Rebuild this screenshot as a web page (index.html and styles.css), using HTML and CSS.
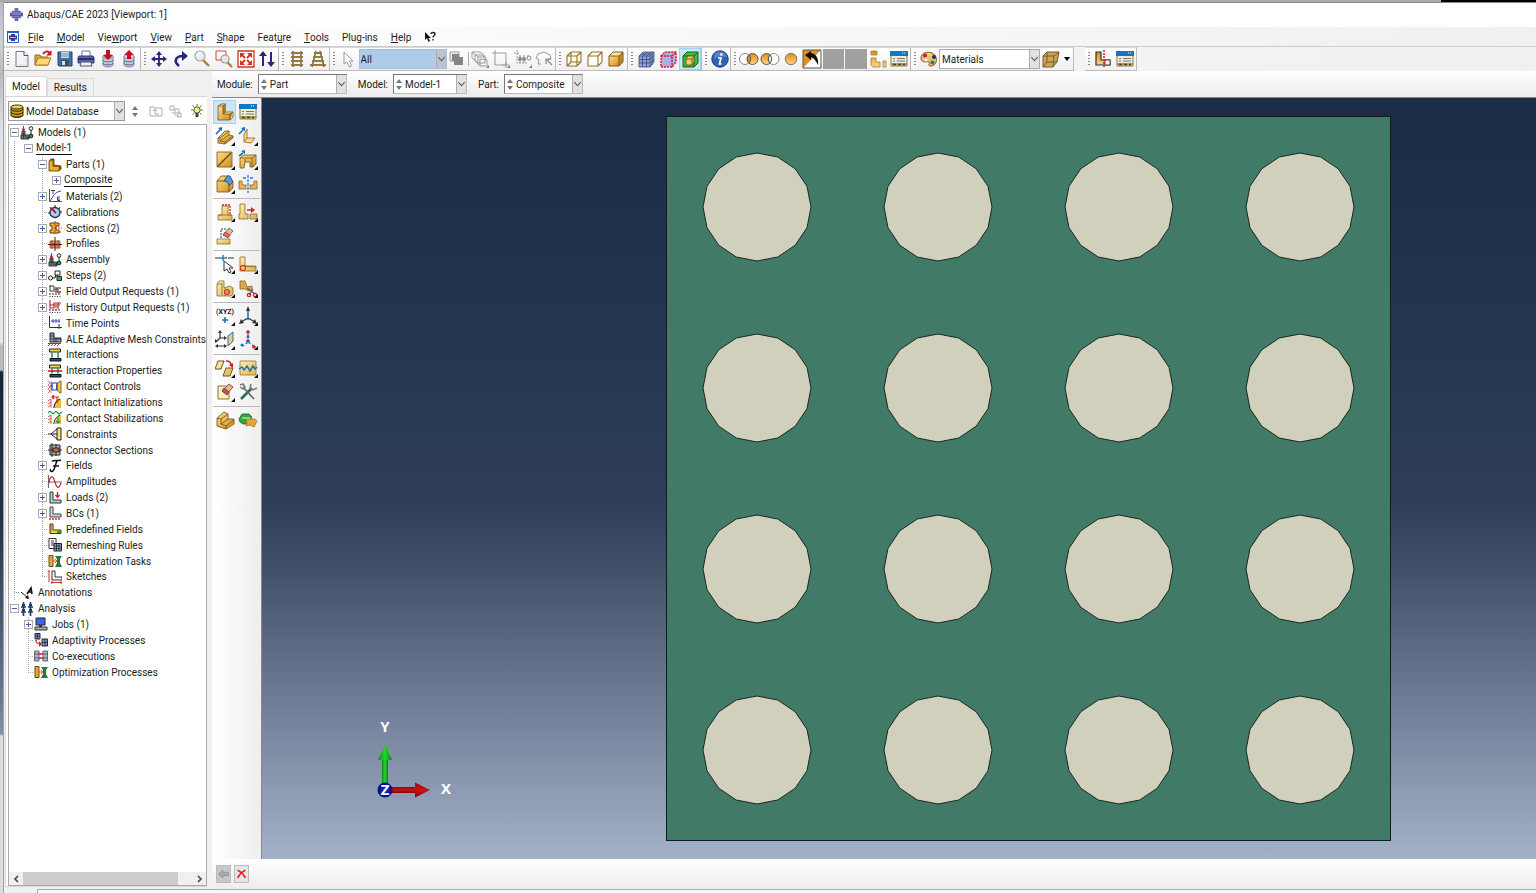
FILE: index.html
```html
<!DOCTYPE html>
<html lang="en">
<head>
<meta charset="utf-8">
<title>Abaqus/CAE 2023 [Viewport: 1]</title>
<link rel="stylesheet" href="styles.css">
</head>
<body>
<svg class="defs" aria-hidden="true">
<defs>
<linearGradient id="gold" x1="0" y1="0" x2="1" y2="1"><stop offset="0" stop-color="#ffe08a"/><stop offset="1" stop-color="#d08a1c"/></linearGradient>
<linearGradient id="org" x1="0" y1="0" x2="0" y2="1"><stop offset="0" stop-color="#e08a10"/><stop offset="1" stop-color="#ffd48a"/></linearGradient>
<linearGradient id="tan" x1="0" y1="0" x2="1" y2="1"><stop offset="0" stop-color="#fff0b8"/><stop offset="1" stop-color="#e0b050"/></linearGradient>
<linearGradient id="sky" x1="0" y1="0" x2="0" y2="1"><stop offset="0" stop-color="#1b2d46"/><stop offset=".3" stop-color="#24354f"/><stop offset=".53" stop-color="#2e3e58"/><stop offset=".62" stop-color="#42516a"/><stop offset="1" stop-color="#a3b1c9"/></linearGradient>
<linearGradient id="gr" x1="0" y1="0" x2="1" y2="0"><stop offset="0" stop-color="#0a8a12"/><stop offset=".5" stop-color="#22d92c"/><stop offset="1" stop-color="#078010"/></linearGradient>
<linearGradient id="rd" x1="0" y1="0" x2="0" y2="1"><stop offset="0" stop-color="#8c0a0a"/><stop offset=".5" stop-color="#d01010"/><stop offset="1" stop-color="#780606"/></linearGradient>
<radialGradient id="bl"><stop offset="0" stop-color="#1a30d8"/><stop offset="1" stop-color="#040a86"/></radialGradient>
<polygon id="fiber" points="0,-54 20.7,-50 38.2,-38.2 50,-20.7 54,0 50,20.7 38.2,38.2 20.7,50 0,54 -20.7,50 -38.2,38.2 -50,20.7 -54,0 -50,-20.7 -38.2,-38.2 -20.7,-50"/>
</defs>
<symbol id="logo" viewBox="0 0 14 14"><path d="M5 0h4v3H5zM5 11h4v3H5zM2 3h10v2H2zM2 9h10v2H2z" fill="#6f6cae"/><path d="M0 5h14v4H0z" fill="#5552a0"/><path d="M2 6.500h10" stroke="#b5b3dc"/></symbol>
<symbol id="vlogo" viewBox="0 0 12 12"><path d="M.5.5h11v11H.5z" fill="#fff" stroke="#1f5fc0"/><path d="M0 0h12v2H0z" fill="#1f5fc0"/><path d="M4 3h4v1.500h2v4H8V10H4V8.500H2v-4h2z" fill="#3c3890"/><path d="M3 6.500h6" stroke="#b5b3dc"/></symbol>
<symbol id="helpc" viewBox="0 0 12 12"><path d="M1 1v8l2-2 1.500 4 1.500-1-1.500-3H7z" fill="#111"/><path d="M7 3c0-2 4-2 4 0 0 1.500-2 1.500-2 3.500M9 8v1.500" fill="none" stroke="#222" stroke-width="1.400"/></symbol>
<symbol id="new" viewBox="0 0 18 18"><path d="M3 1.500h8l4 4v11H3z" fill="#f4f4fb" stroke="#777"/><path d="M11 1.500v4h4" fill="#fff" stroke="#555"/><path d="M13 8v7H5" fill="none" stroke="#d8d8e4"/></symbol>
<symbol id="open" viewBox="0 0 18 18"><path d="M1 15V5h5l1 2h7v8z" fill="#d8a640" stroke="#8d6a1c"/><path d="M1 15l3-7h13l-3 7z" fill="#ffd673" stroke="#a67c22"/><path d="M9 4c2-3 5-3 7-1" fill="none" stroke="#d01818" stroke-width="2"/><path d="M17.500 0v5.500H12z" fill="#d01818"/></symbol>
<symbol id="save" viewBox="0 0 18 18"><path d="M2 2h14v14H3l-1-1z" fill="#3a72ae" stroke="#27425f"/><path d="M5 2h8v6H5z" fill="#c9d8e4"/><path d="M5 4h8M5 6h8" stroke="#7b93a6"/><path d="M5 10h8v6H5z" fill="#3f4c5b"/><path d="M6 11h3v4H6z" fill="#dde"/></symbol>
<symbol id="print" viewBox="0 0 18 18"><path d="M5 1h8v6H5z" fill="#fff" stroke="#67a"/><path d="M2 6h14l1 2v5H1V8z" fill="#5c63b5" stroke="#333a70"/><path d="M1 9h16" stroke="#2d3060" stroke-width="2"/><path d="M4 12h10l1 4H3z" fill="#eef" stroke="#556"/></symbol>
<symbol id="db" viewBox="0 0 18 18"><path d="M4 6v9c0 2.500 10 2.500 10 0V6" fill="#c4cad8" stroke="#8088a0"/><ellipse cx="9" cy="6.500" rx="5" ry="2" fill="#e0e4ec" stroke="#8088a0"/><path d="M4 10c0 2.500 10 2.500 10 0M4 13c0 2.500 10 2.500 10 0" fill="none" stroke="#5d6690"/></symbol>
<symbol id="dbdown" viewBox="0 0 18 18"><use href="#db"/><path d="M7 0h4v5h3L9 10 4 5h3z" fill="#c8101c"/></symbol>
<symbol id="dbup" viewBox="0 0 18 18"><use href="#db"/><path d="M7 9h4V5h3L9 0 4 5h3z" fill="#c8101c"/></symbol>
<symbol id="pan" viewBox="0 0 18 18"><path d="M9 3v12M3 9h12" stroke="#29277d" stroke-width="1.800"/><path d="M9 1l3 4H6zM9 17l3-4H6zM1 9l4-3v6zM17 9l-4-3v6z" fill="#29277d"/></symbol>
<symbol id="rot" viewBox="0 0 18 18"><path d="M7 16C1 11 4 6 11 6" fill="none" stroke="#29277d" stroke-width="2.600"/><path d="M10 1l6 5-6 5z" fill="#29277d"/></symbol>
<symbol id="mag" viewBox="0 0 18 18"><path d="M10 10l6 6" stroke="#b07c38" stroke-width="2.400"/><circle cx="7" cy="6" r="5" fill="#e9edf0" stroke="#a8a8a8" stroke-width="1.200"/><path d="M4 6c0-2 2-3 4-3" fill="none" stroke="#fff" stroke-width="1.500"/></symbol>
<symbol id="magbox" viewBox="0 0 18 18"><path d="M1 1h10v9H1z" fill="none" stroke="#d8402c"/><path d="M12 12l5 5" stroke="#b07c38" stroke-width="2.400"/><circle cx="10" cy="9" r="4" fill="#e9edf0" fill-opacity=".8" stroke="#999" stroke-width="1.200"/></symbol>
<symbol id="fit" viewBox="0 0 18 18"><path d="M1 1h16v16H1z" fill="#fff" stroke="#d83020" stroke-width="1.300"/><path d="M3 3h5L3 8zM15 3v5l-5-5zM3 15v-5l5 5zM15 15h-5l5-5z" fill="#d83020"/><path d="M4 4l4 4M14 4l-4 4M4 14l4-4M14 14l-4-4" stroke="#d83020" stroke-width="1.800"/></symbol>
<symbol id="updn" viewBox="0 0 18 18"><path d="M5 5v11M13 2v11" stroke="#29277d" stroke-width="2"/><path d="M5 1l4 5H1zM13 17l4-5H9z" fill="#29277d"/></symbol>
<symbol id="lad1" viewBox="0 0 18 18"><path d="M5 1v16M13 1v16" stroke="#66501e" stroke-width="1.300"/><path d="M3 3h12M3 7h12M3 11h12M3 15h12" stroke="#96793c" stroke-width="1.800"/></symbol>
<symbol id="lad2" viewBox="0 0 18 18"><path d="M7 1L3 17M11 1l4 16" stroke="#66501e" stroke-width="1.300"/><path d="M5 3h8M4 7h10M3 11h12M1 15h16" stroke="#96793c" stroke-width="1.800"/></symbol>
<symbol id="cur" viewBox="0 0 18 18"><path d="M5 2v12l3-2 2.500 5 2-1-2-5H14z" fill="#fff" stroke="#999"/></symbol>
<symbol id="ovl" viewBox="0 0 18 18"><path d="M2 2h9v9H2z" fill="#eee" stroke="#999"/><path d="M6 7h9v8H6z" fill="#858585"/><path d="M4 4h7v7H4z" fill="#858585"/></symbol>
<symbol id="gcube" viewBox="0 0 18 18"><path d="M1 2h8l5 4v7H7L1 8zM1 2l6 5v6M7 7h7M4 5h7l5 5v6H9l-5-5zM9 9v7M9 9l7 1" fill="none" stroke="#999"/><path d="M18 15v3h-3z" fill="#777"/></symbol>
<symbol id="gbox" viewBox="0 0 18 18"><path d="M0 3h14v12M3 0v15h11" fill="none" stroke="#999"/><path d="M14 12v6M11 15h6" stroke="#999"/><path d="M18 15v3h-3z" fill="#777"/></symbol>
<symbol id="gpts" viewBox="0 0 18 18"><path d="M0 3h6M3 0v13h11" fill="none" stroke="#999" stroke-dasharray="2 1"/><path d="M6 5v8M10 5v8M14 5v5" stroke="#888"/><circle cx="6" cy="9" r="2" fill="#888"/><circle cx="10" cy="9" r="2" fill="#888"/><circle cx="15" cy="8" r="2" fill="#fff" stroke="#888"/><path d="M18 15v3h-3z" fill="#777"/></symbol>
<symbol id="gpoly" viewBox="0 0 18 18"><path d="M6 14H3l1-4-3-2 2-4 6-2 6 3 1 4-3 1" fill="none" stroke="#999"/><path d="M17 15l-5-5M11 14V9h5" fill="none" stroke="#888" stroke-width="1.200"/></symbol>
<symbol id="wire" viewBox="0 0 18 18"><path d="M2 6l4-4h10v10l-4 4H2zM2 6h10v10M12 6l4-4M6 2v10h10M6 12l-4 4" fill="#fff8e8" stroke="#96722a" stroke-width="1.100"/></symbol>
<symbol id="hid" viewBox="0 0 18 18"><path d="M2 6l4-4h10v10l-4 4H2zM2 6h10v10M12 6l4-4" fill="#fff" stroke="#96722a" stroke-width="1.100"/></symbol>
<symbol id="shd" viewBox="0 0 18 18"><path d="M2 6h10v10H2z" fill="url(#gold)"/><path d="M2 6l4-4h10l-4 4z" fill="#ffe9a8"/><path d="M12 6l4-4v10l-4 4z" fill="#c08a20"/><path d="M2 6l4-4h10v10l-4 4H2zM2 6h10v10M12 6l4-4" fill="none" stroke="#7d5d1c"/></symbol>
<symbol id="mesh" viewBox="0 0 18 18"><path d="M2 6l4-4h11v10l-4 5H2z" fill="#8fa3d8"/><path d="M2 6l4-4h11v10l-4 5H2zM2 6h11v11M13 6l4-4M5.500 6v11M9.500 6v11M2 9.500h11l4-4M2 13h11l4-4M6 6l4-4M10 6l4-4M4 4h11v11" fill="none" stroke="#3a4678" stroke-width=".8"/></symbol>
<symbol id="seed" viewBox="0 0 18 18"><path d="M2 6l4-4h11v10l-4 5H2z" fill="#a9b2e2"/><path d="M2 6l4-4h11v10l-4 5H2zM2 6h11v11M13 6l4-4" fill="none" stroke="#e01a30" stroke-width="1.500" stroke-dasharray="2 1"/></symbol>
<symbol id="grn" viewBox="0 0 18 18"><path d="M2 6l4-4h11v11l-4 4H2z" fill="#2fc832" stroke="#156018"/><path d="M2 6h11v11M13 6l4-4" fill="none" stroke="#156018"/><path d="M5 9l2-3h6v6l-2 3H5z" fill="#e8d468" stroke="#8f4e20"/><path d="M5 9h6v6M11 9l2-3" fill="none" stroke="#8f4e20"/></symbol>
<symbol id="info" viewBox="0 0 18 18"><circle cx="9" cy="9" r="8.200" fill="#2f63b4" stroke="#1c3d7c"/><path d="M9 1.500a7 7 0 0 1 7 6c-4-2-9-1-13 1a6 6 0 0 1 6-7z" fill="#6f98d6" opacity=".6"/><circle cx="10.300" cy="4.500" r="1.300" fill="#fff"/><path d="M7 8h3l-1.500 6h2" fill="none" stroke="#fff" stroke-width="1.700"/></symbol>
<symbol id="cc1" viewBox="0 0 20 18"><circle cx="6" cy="9" r="5.500" fill="#fff" stroke="#888"/><circle cx="13.500" cy="9" r="5.500" fill="url(#org)" stroke="#6c5a38"/><path d="M10 5a5.500 5.500 0 0 1 0 8 6 6 0 0 1 0-8" fill="#e89a20" stroke="#555"/></symbol>
<symbol id="cc2" viewBox="0 0 20 18"><circle cx="6.500" cy="9" r="5.500" fill="url(#org)" stroke="#6c5a38"/><circle cx="13.500" cy="9" r="5.500" fill="#fff" stroke="#888"/><path d="M10 5a5.500 5.500 0 0 1 0 8 6 6 0 0 1 0-8" fill="#eee" stroke="#555"/></symbol>
<symbol id="cc3" viewBox="0 0 18 18"><circle cx="9" cy="9" r="5.700" fill="url(#org)" stroke="#8a7854"/></symbol>
<symbol id="inv" viewBox="0 0 20 20"><path d="M1 1h18v18H1z" fill="#fff"/><path d="M1 1h18L1 19z" fill="#e09020"/><path d="M1 1h18v18H1z" fill="none" stroke="#555"/><path d="M3 6l6-4v2c5 1 8 5 7 12-2-4-4-7-7-8v3z" fill="#111"/></symbol>
<symbol id="blocks" viewBox="0 0 18 18"><path d="M2 1h6v4H2zM2 8h5v4h4v5H4l-2-2zM14 11h3v6h-3z" fill="url(#org)" stroke="#a48440" stroke-width=".8"/></symbol>
<symbol id="win" viewBox="0 0 18 18"><path d="M1 2h16v14H1z" fill="#f1ecd6" stroke="#827948"/><path d="M0 1h18v5H0z" fill="#1277c4"/><path d="M12 3h1M14 3h1" stroke="#fff"/><path d="M3 8.500h2M7 8.500h8M3 11h2M7 11h8" stroke="#777"/><path d="M1 13h16v3H1z" fill="#ab9d5c"/><path d="M3 14.500h3M8 14.500h3M13 14.500h2" stroke="#4b431e" stroke-width="1.500"/></symbol>
<symbol id="pal" viewBox="0 0 18 18"><path d="M1 8c0-5 6-7 11-5s6 9 2 12c-3 2-6 1-5-1s0-3-3-2c-3 0-5-1-5-4z" fill="#e8bf7c" stroke="#80592a"/><circle cx="5" cy="5.500" r="2" fill="#d81a20"/><circle cx="9.500" cy="4.500" r="1.600" fill="#f4e030"/><circle cx="14" cy="7" r="2" fill="#1c2a90"/><circle cx="12.500" cy="12.500" r="2" fill="#208a34"/><circle cx="6" cy="10" r="1.500" fill="#fff"/></symbol>
<symbol id="tcube" viewBox="0 0 18 18"><path d="M1 6l4-4h12l-2 10-4 5H1z" fill="#c9a45e"/><path d="M1 6l4-4h12l-2 10-4 5H1zM1 6h11l-1 11M12 6l5-4M5 2v10h10M5 12l-4 5" fill="none" stroke="#7a5c22"/></symbol>
<symbol id="cut" viewBox="0 0 18 18"><path d="M2 2h5v8h9v5H2z" fill="url(#org)" stroke="#333" stroke-width="1.200"/><path d="M11 10h5v5h-5z" fill="#fff" stroke="#444"/><path d="M10 0v18" stroke="#e01818" stroke-width="1.500" stroke-dasharray="2 1"/></symbol>
<symbol id="L3" viewBox="0 0 20 20"><path d="M3 4l3-2h5v8l6 1v4l-3 3H3z" fill="#b87a1c"/><path d="M3 4h5v8h7v6H3z" fill="url(#gold)"/><path d="M3 4l3-2h5L8 4M8 12l3-2h7l-3 2M18 10v5l-3 3" fill="#ffe7a4" stroke="#775314" stroke-width=".8"/><path d="M3 4h5v8h7v6H3z" fill="none" stroke="#775314" stroke-width=".8"/></symbol>
<symbol id="ext" viewBox="0 0 20 20"><path d="M3 12l7-7h4v4l4 1v2l-8 6-7-1z" fill="url(#gold)" stroke="#775314" stroke-width=".8"/><path d="M3 12h2v3l5 1 8-6M5 12l9-7M5 15l9-6M10 16v2" fill="none" stroke="#775314" stroke-width=".8"/><path d="M1 8l5-5" stroke="#1a6fc0" stroke-width="1.600"/><path d="M7 1v4L3 2z" fill="#1a6fc0"/></symbol>
<symbol id="shell" viewBox="0 0 20 20"><path d="M6 8l3-5v9l8 0-4 5-7-1z" fill="#ffd990" stroke="#8a6420" stroke-width=".8"/><path d="M6 16l3-4" fill="none" stroke="#8a6420" stroke-width=".8"/><path d="M1 8l5-5" stroke="#1a6fc0" stroke-width="1.600"/><path d="M7 1v4L3 2z" fill="#1a6fc0"/></symbol>
<symbol id="plan" viewBox="0 0 20 20"><path d="M2 2h15v15H2z" fill="url(#gold)" stroke="#775314" stroke-width=".8"/><path d="M3 16L16 3" stroke="#63430c" stroke-width="1.200"/></symbol>
<symbol id="cutx" viewBox="0 0 20 20"><path d="M2 8l4-3h12v9l-3 3h-3v-5H7l-1 6H2z" fill="url(#gold)" stroke="#775314" stroke-width=".8"/><path d="M2 8h12l4-3M14 8v9M7 12V9" fill="none" stroke="#775314" stroke-width=".8"/><path d="M1 6l4-3" stroke="#1a6fc0" stroke-width="1.600"/><path d="M7 0v4L3 1z" fill="#1a6fc0"/></symbol>
<symbol id="rnd" viewBox="0 0 20 20"><path d="M2 7l4-5h8l4 6v6l-4 4H2z" fill="url(#gold)" stroke="#775314" stroke-width=".8"/><path d="M2 7h7c3 0 5 2 5 5v6" fill="none" stroke="#775314"/><path d="M9 7l3-5h3l3 6-4 4c0-3-2-5-5-5z" fill="#5b93cf" stroke="#325a8c"/></symbol>
<symbol id="mir" viewBox="0 0 20 20"><path d="M1 7h3v4h4v4H1zM19 7h-3v4h-4v4h7z" fill="#e8b55c" stroke="#8a6420" stroke-width=".8"/><path d="M10 1v18" stroke="#1a7fd0" stroke-width="1.300" stroke-dasharray="3 1"/><path d="M5 4h3M12 4h3" stroke="#1a7fd0" stroke-width="1.300"/></symbol>
<symbol id="p1" viewBox="0 0 20 20"><path d="M7 4h6v9h4v5H3v-5h4z" fill="url(#tan)" stroke="#8a6c24" stroke-width=".8"/><path d="M7 3h8v9" fill="none" stroke="#d42020" stroke-width="1.300" stroke-dasharray="2 1"/><path d="M3 13h14" stroke="#8a6c24" stroke-width=".8"/></symbol>
<symbol id="p2" viewBox="0 0 20 20"><path d="M2 2h5v10h3v5H1v-5h1zM12 12h7v5h-7z" fill="url(#tan)" stroke="#8a6c24" stroke-width=".8"/><path d="M9 8h5" stroke="#d42020" stroke-width="1.500"/><path d="M13 5l4 3-4 3z" fill="#d42020"/></symbol>
<symbol id="p3" viewBox="0 0 20 20"><path d="M2 13h13v5H2z" fill="url(#tan)" stroke="#8a6c24" stroke-width=".8"/><path d="M6 12V3h5" fill="none" stroke="#333" stroke-dasharray="2 1"/><path d="M8 9l6-7 4 3-5 6z" fill="#f4b482" stroke="#555" stroke-width=".8"/><path d="M8 9l2-3 5 3-2 3z" fill="#e86a60" stroke="#555" stroke-width=".8"/></symbol>
<symbol id="dat" viewBox="0 0 20 20"><path d="M0 4h5M13 4h6" stroke="#333" stroke-width="1.200"/><path d="M8 1v6M5 4h7" stroke="#1a7fd0" stroke-width="1.500"/><path d="M9 7v10l3-2 2 4 2-1-2-4h4z" fill="#fff" stroke="#333"/></symbol>
<symbol id="part1" viewBox="0 0 20 20"><path d="M2 3h5v9h11v5H2z" fill="url(#tan)" stroke="#8a6c24" stroke-width=".8"/><path d="M4 12l14 1" stroke="#8a6c24" stroke-width=".8"/><circle cx="5" cy="14" r="2.500" fill="none" stroke="#d83020" stroke-width="1.200"/></symbol>
<symbol id="part2" viewBox="0 0 20 20"><path d="M2 6l2-3h5v7l6-2 3 2v6l-2 2H2z" fill="url(#tan)" stroke="#8a6c24" stroke-width=".8"/><path d="M7 5v12M2 6h5M10 10v8" fill="none" stroke="#8a6c24" stroke-width=".8"/><circle cx="12" cy="14" r="2.500" fill="#f09060" stroke="#c42020"/></symbol>
<symbol id="part3" viewBox="0 0 20 20"><path d="M2 3h5l2 6 5-1v4l-4 1-3-2H2z" fill="#e0a850" stroke="#8a6420" stroke-width=".8"/><path d="M9 10l8 6M11 17l4-6" stroke="#555" stroke-width="1.200"/><circle cx="11" cy="17" r="1.700" fill="none" stroke="#c42040" stroke-width="1.200"/><circle cx="17" cy="17" r="1.700" fill="none" stroke="#c42040" stroke-width="1.200"/></symbol>
<symbol id="axes" viewBox="0 0 20 20"><path d="M10 12l-7 4M10 12l7 4" stroke="#333" stroke-width="1.200"/><path d="M10 14V4" stroke="#1a6fc0" stroke-width="1.500"/><path d="M10 0l2 5H8zM1 18l2-5 3 4zM19 18l-5-1 3-4z" fill="#333"/></symbol>
<symbol id="dpl" viewBox="0 0 20 20"><path d="M13 6l5-4v9l-5 5z" fill="#ecca80" stroke="#2a6eb0"/><path d="M5 2v6h5M5 8l-3 3M2 16h9" fill="none" stroke="#333" stroke-width="1.200"/><path d="M5 0l2 3H3zM12 8L9 6v4zM0 13V9l3 2zM0 16l3-2v4zM12 16l-3-2v4z" fill="#333"/></symbol>
<symbol id="d3" viewBox="0 0 20 20"><path d="M10 4v8M10 12l-5 4M10 12l6 4" stroke="#1a7fd0" stroke-width="1.500" stroke-dasharray="3 2"/><path d="M10 0v4M8 2h4M16 15v4M14 17h4M8 11h4" stroke="#d82020" stroke-width="1.300"/><circle cx="10" cy="7" r="1.500" fill="#1a6fc0"/><circle cx="4" cy="15" r="1.500" fill="#1a6fc0"/></symbol>
<symbol id="mv" viewBox="0 0 20 20"><path d="M3 3h6l-3 8H0zM11 10h7l-3 8H8z" fill="url(#tan)" stroke="#6e5418"/><path d="M11 3c3 0 5 1 5 4" fill="none" stroke="#d42020" stroke-width="1.500"/><path d="M18 5v5l-4-3z" fill="#d42020"/></symbol>
<symbol id="wav" viewBox="0 0 20 20"><path d="M2 3h16v14H2z" fill="url(#tan)" stroke="#a07820" stroke-width=".8"/><path d="M1 11l3-2 2 3 3-4 3 5 3-5 2 3 2-2" fill="none" stroke="#1a6fc0" stroke-width="1.500"/></symbol>
<symbol id="ers" viewBox="0 0 20 20"><path d="M3 4h11v13H3z" fill="#ffefc4" stroke="#96701e"/><path d="M7 9l7-7 4 3-6 7z" fill="#f4b482" stroke="#444" stroke-width=".8"/><path d="M7 9l2-3 5 4-2 3z" fill="#d84a50" stroke="#444" stroke-width=".8"/></symbol>
<symbol id="tls" viewBox="0 0 20 20"><path d="M3 17L14 6" stroke="#2e6a64" stroke-width="2.600"/><path d="M5 5l11 12" stroke="#666" stroke-width="1.800"/><path d="M13 2l-1 4 3 2 4-2M2 3l3-1 2 3-2 2-3-2" fill="none" stroke="#777" stroke-width="1.500"/></symbol>
<symbol id="as1" viewBox="0 0 20 20"><path d="M2 8l7-6 4 2v5l6 0v5l-8 5-9-3z" fill="url(#gold)" stroke="#6b4a10" stroke-width=".8"/><path d="M2 8l4 1v5l5 2v3M6 9l7-5M6 14l7-5M11 16l8-6" fill="none" stroke="#6b4a10" stroke-width=".8"/></symbol>
<symbol id="as2" viewBox="0 0 20 20"><path d="M1 9l3-5h7l3 3-2 3 1 4H5l-3-2z" fill="#2fa83a" stroke="#14641e" stroke-width=".8"/><path d="M8 9h9l2 2-3 6-4-2-4 1 1-3z" fill="#e4a43c" stroke="#a4752a" stroke-width=".8"/><path d="M4 8h8" stroke="#9fe4a4" stroke-width="1.500"/></symbol>
<symbol id="spin" viewBox="0 0 8 16"><path d="M4 3l3 4H1zM4 14l3-4H1z" fill="#777"/></symbol>
<symbol id="chev" viewBox="0 0 10 10"><path d="M1.500 3L5 7l3.500-4" fill="none" stroke="#555" stroke-width="1.200"/></symbol>
<symbol id="dbase" viewBox="0 0 14 14"><path d="M1 3v8c0 3 12 3 12 0V3" fill="#c9a21c" stroke="#3c3208"/><path d="M1 5c0 3 12 3 12 0M1 8c0 3 12 3 12 0M1 11c0 3 12 3 12 0" fill="none" stroke="#2e2706"/><ellipse cx="7" cy="3" rx="6" ry="2" fill="#ecd050" stroke="#3c3208"/></symbol>
<symbol id="fup" viewBox="0 0 14 12"><path d="M1 11V2h4l1 1h7v8z" fill="none" stroke="#aaa"/><path d="M6 5v4h4M4 6l2-2 2 2" fill="none" stroke="#aaa"/></symbol>
<symbol id="lnk" viewBox="0 0 14 14"><path d="M1 2h4v4H1zM5 5l5 0v4H6V6M9 9l3 0v4H9z" fill="none" stroke="#aaa"/><path d="M3 8l6 5" stroke="#aaa"/></symbol>
<symbol id="bulb" viewBox="0 0 14 14"><circle cx="7" cy="6" r="3.200" fill="#f2f28a" stroke="#444"/><path d="M5.500 9h3v4h-3z" fill="#444"/><path d="M7 0v2M1 6h2M11 6h2M2.500 1.500l1.500 1.500M11.500 1.500L10 3M2.500 10.500L4 9M11.500 10.500L10 9" stroke="#6c7420"/></symbol>
<symbol id="t-model" viewBox="0 0 14 14"><path d="M2 5h3v4H2zM1 9h8v4H1z" fill="#888" stroke="#333"/><path d="M1 11h8M3.500 5v8M6 9v4" stroke="#333" stroke-width=".7"/><path d="M3.500 0v5M2 2.500L3.500 5 5 2.500" stroke="#e01818" fill="none"/><circle cx="11" cy="2.500" r="1.800" fill="#fff" stroke="#222"/><path d="M11 4v6M7 12l4-2" stroke="#222"/><circle cx="11" cy="10" r="1.900" fill="#1fa63a" stroke="#123"/></symbol>
<symbol id="t-part" viewBox="0 0 14 14"><path d="M1 3l2-2h3v6l7 1v3l-2 2H1z" fill="#8f6410" stroke="#4c360a" stroke-width=".8"/><path d="M1.500 3h3v6h6v3.500h-9z" fill="#eab02a"/></symbol>
<symbol id="t-mat" viewBox="0 0 14 14"><path d="M1.500 0v12.500H14" stroke="#555" fill="none"/><path d="M2 12C5 8 6 3 13 2" stroke="#333ab0" fill="none"/><path d="M3 1.500h4M5 1.500V5M12 8H9.500v3.500H12M9 10h3" stroke="#444" fill="none"/></symbol>
<symbol id="t-cal" viewBox="0 0 14 14"><circle cx="7" cy="7.500" r="5" fill="#a8d0f0" stroke="#1c3050" stroke-width="1.300"/><path d="M7 0v3M12 2l-1 2M14 7h-2M2 2l1 2M0 8h2" stroke="#222"/><path d="M3 3l5 5" stroke="#c41a1a" stroke-width="1.800"/></symbol>
<symbol id="t-sec" viewBox="0 0 14 14"><path d="M2 2h9v3H8v4h3v3H2V9h2V5H2z" fill="#f0b030" stroke="#5c3a10"/><path d="M7 0v13M7 7h7M11 11h3" stroke="#d82020" stroke-dasharray="2 1"/></symbol>
<symbol id="t-pro" viewBox="0 0 14 14"><path d="M2 4h10v3H2zM2 8h10v3H2z" fill="#f09050" stroke="#b84020" stroke-width=".8"/><path d="M7 0v14M0 7.500h14" stroke="#3a2020"/><path d="M4 3v9M10 3v9" stroke="#a83820" stroke-width=".8"/></symbol>
<symbol id="t-step" viewBox="0 0 14 14"><circle cx="2.500" cy="9" r="2" fill="#fff" stroke="#222"/><path d="M4 9h3l1-5h4M7 7h3" stroke="#222" fill="none"/><path d="M7 2h5v4H7z" fill="#fff" stroke="#222"/><path d="M9 7.500h4.500v4H9z" fill="#38b444" stroke="#222"/></symbol>
<symbol id="t-fo" viewBox="0 0 14 14"><path d="M2 1v6h6M2 2h4v4M7 4h6M9 4v4h4" fill="none" stroke="#333"/><path d="M6 5l5 1M7 8h6" stroke="#c02020"/><path d="M1 10h12M2 12v1M4.500 12v1M7 12v1M9.500 12v1M12 12v1" stroke="#333" stroke-dasharray="2 1"/></symbol>
<symbol id="t-ho" viewBox="0 0 14 14"><path d="M2 0v8h4V3h7M10 3v6M2 5h10" fill="none" stroke="#b82020" stroke-width="1.100"/><path d="M8 6v4M2 12v1M4.500 12v1M7 12v1M9.500 12v1M12 12v1M1 10h12" stroke="#333" stroke-dasharray="2 1"/></symbol>
<symbol id="t-time" viewBox="0 0 14 14"><path d="M1.500 0v11.500H14" fill="none" stroke="#333"/><path d="M3 5h9M5 3v4M8 3v4M11 3v4" stroke="#3848b8"/><path d="M11 8v5" stroke="#333"/></symbol>
<symbol id="t-ale" viewBox="0 0 14 14"><path d="M2 1h4v5h7v4H2z" fill="#8aa0b8" stroke="#222"/><path d="M2 4h4M2 7h11M8 6v4M6 6v4" stroke="#222" stroke-width=".7"/><path d="M0 14l2-2M3 14l2-2M6 14l2-2M9 14l2-2M0 11.500h13" stroke="#d02020"/></symbol>
<symbol id="t-int" viewBox="0 0 14 14"><path d="M1.500 1h11v3h-11z" fill="#f2d850" stroke="#222"/><path d="M4 4v6M10 4v6M3 6h2M9 6h2M3 8h2M9 8h2" stroke="#169a40"/><path d="M2 10.500h11v2.500H2z" fill="#304880" stroke="#111"/></symbol>
<symbol id="t-ip" viewBox="0 0 14 14"><use href="#t-int"/><path d="M0 7h14" stroke="#d02020" stroke-width="1.600"/></symbol>
<symbol id="t-cc" viewBox="0 0 14 14"><path d="M0 1l2 2-2 2 2 2-2 2 2 2-2 2M3 1v12" fill="none" stroke="#d87878"/><path d="M13 1v12c-6-1-6-11 0-12z" fill="#eecb30" stroke="#7a6a20"/><path d="M4 3h5v7H4zM2 6h3" fill="none" stroke="#2838d0" stroke-width="1.200"/></symbol>
<symbol id="t-ci" viewBox="0 0 14 14"><path d="M3 4v9M0 6l3-2M0 9l3-2M0 12l3-2" stroke="#d05858"/><path d="M13 4v9H7c0-4 2-8 6-9z" fill="#eec030"/><path d="M12 4c-4 2-6 5-6 9" fill="none" stroke="#222" stroke-width="1.200"/><path d="M4 2h7M6 0L4 2l2 2M9 2v6" fill="none" stroke="#d82020" stroke-width="1.200"/></symbol>
<symbol id="t-cs" viewBox="0 0 14 14"><path d="M3 4v9M0 6l3-2M0 9l3-2M0 12l3-2" stroke="#b05858"/><path d="M13 4v9H7c0-4 2-8 6-9z" fill="#eec030"/><path d="M12 4c-4 2-6 5-6 9" fill="none" stroke="#222"/><path d="M0 2l2-2 3 3 3-3 3 3 3-2M10 5v7M8 10l2 2 2-2" fill="none" stroke="#159a48" stroke-width="1.100"/></symbol>
<symbol id="t-con" viewBox="0 0 14 14"><path d="M9 1h4v12H9z" fill="#f2e070" stroke="#222"/><path d="M9 2L3 7l6 5M0 7h9" fill="none" stroke="#222"/></symbol>
<symbol id="t-cns" viewBox="0 0 14 14"><path d="M2 2h10v10H2z" fill="#bbb" stroke="#222"/><path d="M0 7h14M4 0v14M8 1v12" stroke="#222"/><path d="M5 5h6v4H5z" fill="#c06848" stroke="#222"/></symbol>
<symbol id="t-fld" viewBox="0 0 14 14"><path d="M4 2.500c2-2 6 0 9-1.500M9 2C7 5 7 12 4 12.500c-2 0-2-2-1-2M5 7h6" fill="none" stroke="#111" stroke-width="1.500"/></symbol>
<symbol id="t-amp" viewBox="0 0 14 14"><path d="M.5 0v13M0 7h14" stroke="#666"/><path d="M1 8C2 0 5 0 7 7s4 7 6 1" fill="none" stroke="#c02828" stroke-width="1.200"/></symbol>
<symbol id="t-load" viewBox="0 0 14 14"><path d="M2 1h3v8h8v3H2z" fill="#b8c8d8" stroke="#333"/><path d="M9.500 1v5M7.500 4l2 2.500 2-2.500" fill="none" stroke="#d82020" stroke-width="1.400"/></symbol>
<symbol id="t-bc" viewBox="0 0 14 14"><path d="M2 1h3v7h8v3H2z" fill="#c8d4e0" stroke="#444"/><path d="M1 13h12" stroke="#d83030" stroke-width="1.600" stroke-dasharray="2 1"/></symbol>
<symbol id="t-pf" viewBox="0 0 14 14"><path d="M2 2h3v6h8v3.500H2z" fill="#e8e040" stroke="#333"/><path d="M3 3v7" stroke="#e04020"/><path d="M9 10h4" stroke="#20a040" stroke-width="2"/></symbol>
<symbol id="t-rm" viewBox="0 0 14 14"><path d="M1 .5h7v10H1z" fill="#fff" stroke="#333"/><path d="M3 3h3M3 5h3M3 7h3" stroke="#333"/><path d="M6 5.500h7.500V13H6z" fill="#8ca4d8" stroke="#222"/><path d="M8.500 5v8M11 5v8M6 8h8M6 10.500h8" stroke="#223" stroke-width=".8"/></symbol>
<symbol id="t-ot" viewBox="0 0 14 14"><path d="M1 1.500h4v11H1z" fill="#e8a830" stroke="#6b4a18"/><path d="M7 2h7l-2 3v4l2 4H7l2-4V5z" fill="#1f7a34"/><path d="M4 7h5M7 5l2 2-2 2" stroke="#e06020" fill="none"/></symbol>
<symbol id="t-sk" viewBox="0 0 14 14"><path d="M4 1h3v6h7v3H4z" fill="#fff" stroke="#333"/><path d="M1 1v11M0 1h2M3 12.500h11M4 11v3M13 11v3" stroke="#d02828"/></symbol>
<symbol id="t-ann" viewBox="0 0 14 14"><path d="M1 6l7 6" stroke="#111"/><path d="M9 13l-4-1 3-3z" fill="#111"/><path d="M7 8l4-6 1 6M8.500 6h3" fill="none" stroke="#111" stroke-width="1.600"/></symbol>
<symbol id="t-ana" viewBox="0 0 14 14"><path d="M3.500 0v14M10.500 0v14M1 5h5M1 10h5M8 5h5M8 10h5" stroke="#173a66" stroke-width="1.600"/><path d="M2 2h3v2H2zM9 2h3v2H9zM2 7h3v2H2zM9 7h3v2H9z" fill="#173a66"/></symbol>
<symbol id="t-job" viewBox="0 0 14 14"><path d="M2 1h9v7H2z" fill="#3868e8" stroke="#223"/><path d="M5 8h3v2H5z" fill="#333"/><path d="M1 10h12v3H1z" fill="#aaa" stroke="#333"/></symbol>
<symbol id="t-ad" viewBox="0 0 14 14"><path d="M1 .5h5V6H1zM8 6h5.500v7H8z" fill="#7c98c8" stroke="#223"/><path d="M3.500 0v6M1 3h5M11 6v7M8 9.500h6" stroke="#223" stroke-width=".8"/><path d="M2 7c0 3 1 4 5 4M5 9l2 2-2 2" stroke="#d02020" fill="none" stroke-width="1.300"/></symbol>
<symbol id="t-co" viewBox="0 0 14 14"><path d="M.5 2H5v10H.5zM9 2h4.500v10H9z" fill="#a4b4d0" stroke="#667"/><path d="M0 5h5M0 9h5M9 5h5M9 9h5" stroke="#556" stroke-width=".8"/><path d="M4 5h5M5 9h5" stroke="#d02020" stroke-width="1.300"/></symbol>
</svg>

<div class="behind" aria-hidden="true"></div>
<div class="window">
<div class="edge" aria-hidden="true"><span></span></div>
<header class="title"><svg class="i13"><use href="#logo"/></svg><h1>Abaqus/CAE 2023 [Viewport: 1]</h1></header>
<nav class="menu">
<svg class="i12"><use href="#vlogo"/></svg>
<button><u>F</u>ile</button><button><u>M</u>odel</button><button>Vie<u>w</u>port</button><button><u>V</u>iew</button><button><u>P</u>art</button><button><u>S</u>hape</button><button>Feat<u>u</u>re</button><button><u>T</u>ools</button><button>Plu<u>g</u>-ins</button><button><u>H</u>elp</button><button aria-label="Context help"><svg class="i12"><use href="#helpc"/></svg></button>
</nav>
<div class="toolbar">
<div class="group g-file"><i class="grip"></i><button aria-label="New"><svg><use href="#new"/></svg></button><button aria-label="Open"><svg><use href="#open"/></svg></button><button aria-label="Save"><svg><use href="#save"/></svg></button><button aria-label="Print"><svg><use href="#print"/></svg></button><button aria-label="Load session"><svg><use href="#dbdown"/></svg></button><button aria-label="Save session"><svg><use href="#dbup"/></svg></button></div>
<div class="group g-view"><i class="grip"></i><button aria-label="Pan"><svg><use href="#pan"/></svg></button><button aria-label="Rotate"><svg><use href="#rot"/></svg></button><button aria-label="Magnify"><svg><use href="#mag"/></svg></button><button aria-label="Box zoom"><svg><use href="#magbox"/></svg></button><button aria-label="Fit view"><svg><use href="#fit"/></svg></button><button aria-label="Cycle views"><svg><use href="#updn"/></svg></button></div>
<div class="group g-persp"><i class="grip"></i><button aria-label="Parallel"><svg><use href="#lad1"/></svg></button><button aria-label="Perspective"><svg><use href="#lad2"/></svg></button></div>
<div class="group g-sel"><i class="grip"></i><button aria-label="Select"><svg><use href="#cur"/></svg></button><span class="combo all"><select aria-label="Selection filter"><option>All</option></select><svg class="chev"><use href="#chev"/></svg></span><button aria-label="Overlap"><svg><use href="#ovl"/></svg></button><i class="bar"></i><button aria-label="Select inside"><svg><use href="#gcube"/></svg></button><button aria-label="Drag shape"><svg><use href="#gbox"/></svg></button><button aria-label="Drag scope"><svg><use href="#gpts"/></svg></button><button aria-label="Polygon"><svg><use href="#gpoly"/></svg></button></div>
<div class="group g-three"><i class="grip"></i><button aria-label="Wireframe"><svg><use href="#wire"/></svg></button><button aria-label="Hidden line"><svg><use href="#hid"/></svg></button><button aria-label="Shaded"><svg><use href="#shd"/></svg></button></div>
<div class="group g-mesh"><i class="grip"></i><button aria-label="Mesh"><svg><use href="#mesh"/></svg></button><button aria-label="Seeds"><svg><use href="#seed"/></svg></button><button class="on" aria-label="Geometry"><svg><use href="#grn"/></svg></button></div>
<div class="group g-info"><i class="grip"></i><button aria-label="Query"><svg><use href="#info"/></svg></button></div>
<div class="group g-disp"><i class="grip"></i><button aria-label="Intersect"><svg class="w20"><use href="#cc1"/></svg></button><button aria-label="Remove"><svg class="w20"><use href="#cc2"/></svg></button><button aria-label="Either"><svg><use href="#cc3"/></svg></button><button aria-label="Undo display"><svg class="i20"><use href="#inv"/></svg></button><button class="blank" aria-label="Display slot 1"></button><button class="blank" aria-label="Display slot 2"></button><button aria-label="Replace all"><svg><use href="#blocks"/></svg></button><button aria-label="Display group manager"><svg><use href="#win"/></svg></button></div>
<div class="group g-color"><i class="grip"></i><button aria-label="Colors"><svg><use href="#pal"/></svg></button><span class="combo mat"><select aria-label="Color code"><option>Materials</option></select><svg class="chev"><use href="#chev"/></svg></span><button aria-label="Translucency"><svg><use href="#tcube"/></svg></button><button class="drop" aria-label="Translucency menu"><i class="caret"></i></button></div>
<div class="group g-cut"><i class="grip"></i><button aria-label="View cut"><svg><use href="#cut"/></svg></button><button aria-label="View cut manager"><svg><use href="#win"/></svg></button></div>
</div>

<main class="work">
<aside class="side">
<div class="tabs" role="tablist"><button role="tab" class="tab cur" aria-selected="true">Model</button><button role="tab" class="tab" aria-selected="false">Results</button></div>
<div class="pane">
<div class="dbrow"><span class="combo dbc"><svg class="i14"><use href="#dbase"/></svg><select aria-label="Database"><option>Model Database</option></select><svg class="chev"><use href="#chev"/></svg></span><button aria-label="Step"><svg class="sp"><use href="#spin"/></svg></button><button aria-label="Up"><svg class="i14"><use href="#fup"/></svg></button><button aria-label="Link"><svg class="i14"><use href="#lnk"/></svg></button><button aria-label="Tips"><svg class="i14"><use href="#bulb"/></svg></button></div>
<div class="treebox">
<ul class="tree">
<li class="l0 first"><button class="ex" aria-label="Collapse"></button><svg><use href="#t-model"/></svg><span>Models (1)</span></li>
<li class="l1 in"><button class="ex" aria-label="Collapse"></button><span class="sel">Model-1</span></li>
<li class="l2 in top"><button class="ex" aria-label="Collapse"></button><svg><use href="#t-part"/></svg><span>Parts (1)</span></li>
<li class="l3 in"><button class="ex plus" aria-label="Expand"></button><span class="sel">Composite</span></li>
<li class="l2 in"><button class="ex plus" aria-label="Expand"></button><svg><use href="#t-mat"/></svg><span>Materials (2)</span></li>
<li class="l2 in"><i></i><svg><use href="#t-cal"/></svg><span>Calibrations</span></li>
<li class="l2 in"><button class="ex plus" aria-label="Expand"></button><svg><use href="#t-sec"/></svg><span>Sections (2)</span></li>
<li class="l2 in"><i></i><svg><use href="#t-pro"/></svg><span>Profiles</span></li>
<li class="l2 in"><button class="ex plus" aria-label="Expand"></button><svg><use href="#t-model"/></svg><span>Assembly</span></li>
<li class="l2 in"><button class="ex plus" aria-label="Expand"></button><svg><use href="#t-step"/></svg><span>Steps (2)</span></li>
<li class="l2 in"><button class="ex plus" aria-label="Expand"></button><svg><use href="#t-fo"/></svg><span>Field Output Requests (1)</span></li>
<li class="l2 in"><button class="ex plus" aria-label="Expand"></button><svg><use href="#t-ho"/></svg><span>History Output Requests (1)</span></li>
<li class="l2 in"><i></i><svg><use href="#t-time"/></svg><span>Time Points</span></li>
<li class="l2 in"><i></i><svg><use href="#t-ale"/></svg><span>ALE Adaptive Mesh Constraints</span></li>
<li class="l2 in"><i></i><svg><use href="#t-int"/></svg><span>Interactions</span></li>
<li class="l2 in"><i></i><svg><use href="#t-ip"/></svg><span>Interaction Properties</span></li>
<li class="l2 in"><i></i><svg><use href="#t-cc"/></svg><span>Contact Controls</span></li>
<li class="l2 in"><i></i><svg><use href="#t-ci"/></svg><span>Contact Initializations</span></li>
<li class="l2 in"><i></i><svg><use href="#t-cs"/></svg><span>Contact Stabilizations</span></li>
<li class="l2 in"><i></i><svg><use href="#t-con"/></svg><span>Constraints</span></li>
<li class="l2 in"><i></i><svg><use href="#t-cns"/></svg><span>Connector Sections</span></li>
<li class="l2 in"><button class="ex plus" aria-label="Expand"></button><svg><use href="#t-fld"/></svg><span>Fields</span></li>
<li class="l2 in"><i></i><svg><use href="#t-amp"/></svg><span>Amplitudes</span></li>
<li class="l2 in"><button class="ex plus" aria-label="Expand"></button><svg><use href="#t-load"/></svg><span>Loads (2)</span></li>
<li class="l2 in"><button class="ex plus" aria-label="Expand"></button><svg><use href="#t-bc"/></svg><span>BCs (1)</span></li>
<li class="l2 in"><i></i><svg><use href="#t-pf"/></svg><span>Predefined Fields</span></li>
<li class="l2 in"><i></i><svg><use href="#t-rm"/></svg><span>Remeshing Rules</span></li>
<li class="l2 in"><i></i><svg><use href="#t-ot"/></svg><span>Optimization Tasks</span></li>
<li class="l2 in last"><i></i><svg><use href="#t-sk"/></svg><span>Sketches</span></li>
<li class="l0 in"><i></i><svg><use href="#t-ann"/></svg><span>Annotations</span></li>
<li class="l0"><button class="ex" aria-label="Collapse"></button><svg><use href="#t-ana"/></svg><span>Analysis</span></li>
<li class="l1 job"><button class="ex plus" aria-label="Expand"></button><svg><use href="#t-job"/></svg><span>Jobs (1)</span></li>
<li class="l1 job"><i></i><svg><use href="#t-ad"/></svg><span>Adaptivity Processes</span></li>
<li class="l1 job"><i></i><svg><use href="#t-co"/></svg><span>Co-executions</span></li>
<li class="l1 job last"><i></i><svg><use href="#t-ot"/></svg><span>Optimization Processes</span></li>
</ul>
<div class="scroll"><button aria-label="Scroll left"><svg><path d="M6 1L3 4l3 3" fill="none" stroke="#444" stroke-width="1.600"/></svg></button><div class="track"><div class="thumb"></div></div><button aria-label="Scroll right"><svg><path d="M3 1l3 3-3 3" fill="none" stroke="#444" stroke-width="1.600"/></svg></button></div>
</div>
</div>
</aside>
<section class="right">
<div class="context">
<label for="module">Module:</label><span class="combo c-mod"><svg class="sp"><use href="#spin"/></svg><select id="module"><option>Part</option></select><svg class="chev"><use href="#chev"/></svg></span>
<label for="model">Model:</label><span class="combo c-model"><svg class="sp"><use href="#spin"/></svg><select id="model"><option>Model-1</option></select><svg class="chev"><use href="#chev"/></svg></span>
<label for="part">Part:</label><span class="combo c-part"><svg class="sp"><use href="#spin"/></svg><select id="part"><option>Composite</option></select><svg class="chev"><use href="#chev"/></svg></span>
</div>
<div class="stage">
<div class="toolbox">
<div class="set"><button class="on" aria-label="Create part"><svg><use href="#L3"/></svg></button><button aria-label="Part manager"><svg class="i18"><use href="#win"/></svg></button><button class="fly" aria-label="Solid extrude"><svg><use href="#ext"/></svg></button><button class="fly" aria-label="Shell extrude"><svg><use href="#shell"/></svg></button><button class="fly" aria-label="Wire"><svg><use href="#plan"/></svg></button><button class="fly" aria-label="Cut extrude"><svg><use href="#cutx"/></svg></button><button class="fly" aria-label="Round"><svg><use href="#rnd"/></svg></button><button aria-label="Mirror"><svg><use href="#mir"/></svg></button></div>
<div class="set"><button class="fly" aria-label="Edit feature"><svg><use href="#p1"/></svg></button><button class="fly" aria-label="Regenerate feature"><svg><use href="#p2"/></svg></button><button aria-label="Delete feature"><svg><use href="#p3"/></svg></button></div>
<div class="set"><button class="fly" aria-label="Partition edge"><svg><use href="#dat"/></svg></button><button class="fly" aria-label="Partition face"><svg><use href="#part1"/></svg></button><button class="fly" aria-label="Partition cell"><svg><use href="#part2"/></svg></button><button class="fly" aria-label="Cut cell"><svg><use href="#part3"/></svg></button></div>
<div class="set"><button class="fly" aria-label="Datum point"><svg viewBox="0 0 20 20"><text x="10" y="8" text-anchor="middle" class="xyz-text">(XYZ)</text><path d="M10 11v6M7 14h6" stroke="#1a6fc0" stroke-width="1.500"/></svg></button><button class="fly" aria-label="Datum axis"><svg><use href="#axes"/></svg></button><button class="fly" aria-label="Datum plane"><svg><use href="#dpl"/></svg></button><button class="fly" aria-label="Datum system"><svg><use href="#d3"/></svg></button></div>
<div class="set"><button class="fly" aria-label="Offset faces"><svg><use href="#mv"/></svg></button><button class="fly" aria-label="Repair"><svg><use href="#wav"/></svg></button><button class="fly" aria-label="Erase"><svg><use href="#ers"/></svg></button><button aria-label="Geometry tools"><svg><use href="#tls"/></svg></button></div>
<div class="set"><button aria-label="Midsurface"><svg><use href="#as1"/></svg></button><button aria-label="Thickness"><svg><use href="#as2"/></svg></button></div>
</div>
<svg class="viewport" viewBox="262 98 1274 761" preserveAspectRatio="xMidYMid slice" role="img" aria-label="Composite part, sixteen fibers in a square matrix">
<rect x="262" y="98" width="1274" height="761" fill="url(#sky)"/>
<rect x="666.500" y="116.500" width="724" height="724" fill="#417b67" stroke="#0f1c18"/>
<g fill="#d1d0bc" stroke="#1b2722">
<use href="#fiber" x="757" y="207"/><use href="#fiber" x="938" y="207"/><use href="#fiber" x="1119" y="207"/><use href="#fiber" x="1300" y="207"/>
<use href="#fiber" x="757" y="388"/><use href="#fiber" x="938" y="388"/><use href="#fiber" x="1119" y="388"/><use href="#fiber" x="1300" y="388"/>
<use href="#fiber" x="757" y="569"/><use href="#fiber" x="938" y="569"/><use href="#fiber" x="1119" y="569"/><use href="#fiber" x="1300" y="569"/>
<use href="#fiber" x="757" y="750"/><use href="#fiber" x="938" y="750"/><use href="#fiber" x="1119" y="750"/><use href="#fiber" x="1300" y="750"/>
</g>
<rect x="382" y="758" width="6" height="30" fill="url(#gr)"/><path d="M385 745l7 15h-14z" fill="url(#gr)"/>
<rect x="388" y="787" width="28" height="6" fill="url(#rd)"/><path d="M430 790l-15 7.500v-15z" fill="url(#rd)"/>
<circle cx="385" cy="790" r="7.500" fill="url(#bl)"/>
<g class="axis" text-anchor="middle"><text x="385" y="732">Y</text><text x="385" y="795">Z</text><text x="446" y="794">X</text></g>
</svg>
</div>
<div class="prompt"><button class="back" aria-label="Previous"><svg viewBox="0 0 16 16"><path d="M2 8l5-5v3h7v4H7v3z" fill="#aaa" stroke="#8e8e8e"/></svg></button><button class="cancel" aria-label="Cancel"><svg viewBox="0 0 15 15"><path d="M3 3c4 2 7 5 9 9M12 3C8 5 5 8 3 12" fill="none" stroke="#ee1c1c" stroke-width="1.800"/></svg></button></div>
</section>
</main>
<footer class="foot"></footer>
</div>
</body>
</html>
```
FILE: styles.css
```css
*{box-sizing:border-box}
body{margin:0;height:100vh;display:flex;flex-direction:column;overflow:hidden;background:#f0f0f0;color:#1c1c1c;font-family:"Roboto","Noto Sans",sans-serif;font-size:10px;line-height:15px}
.defs{position:absolute;width:0;height:0}
button{border:0;padding:0;margin:0;background:none;font:inherit;color:inherit;display:flex;align-items:center;justify-content:center}
select{appearance:none;border:0;padding:0;margin:0;background:none;font:inherit;color:inherit;flex:1;min-width:0;outline:0}
svg{display:block;flex:none}
.xyz-text{font-size:7px;font-weight:700;fill:#222}
.behind{height:2px;background:linear-gradient(90deg,#a9a9a9 93.8%,#000 93.8%)}
.window{flex:1;min-height:0;display:grid;grid-template:25px 20px 24px minmax(0,1fr) 4px/4px minmax(0,1fr)}
.edge{grid-row:1/6;border-right:1px solid #a0a0a0;display:grid}
.edge span{background:linear-gradient(#b6babf 0,#ced3d8 40px,#b6bac0 70px,#e0e3e5 130px,#e9e9e9 340px,#bbb 344px,#bbb 368px,#14253f 370px,#22334e 520px,#6c7b92 700px,#8593aa 732px,#dcdcdc 734px)}
.i12{width:12px;height:12px}.i13{width:13px;height:13px}.i14{width:14px;height:14px}
.title{background:#fff;display:flex;align-items:center;gap:4px;padding:0 0 2px 6px;border-top:1px solid #888}
.title h1{margin:0;font:inherit}
.menu{background:linear-gradient(90deg,#fff,#f0f0f0);display:flex;align-items:center;gap:13px;padding:1px 0 0 3px;border-bottom:1px solid #ccc}
.menu>svg{margin-right:-4px}
.menu u{text-underline-offset:1px}
.toolbar{display:flex;background:linear-gradient(90deg,#fafafa,#f0f0f0)}
.group{display:flex;align-items:center;flex:none;border-right:1px solid #bbb;border-bottom:1px solid #bbb;border-top:1px solid #d8d8d8;background:linear-gradient(#fff,#f0f0f0)}
.group button{flex:1;height:22px;min-width:0}
.group button svg{width:18px;height:18px}
.group button .w20{width:20px}
.group button .i20{width:20px;height:20px}
.group .on,.toolbox .on{background:#cbe6fa;outline:1px solid #a4d0f0;outline-offset:-1px}
.group .blank{background:#a0a0a0;height:20px;margin-right:1px}
.grip{flex:none;width:7px;height:14px;background:repeating-linear-gradient(#888 0 1px,transparent 1px 3px) 3px 0/2px 100% no-repeat}
.g-file{width:137px}.g-view{width:138px}.g-persp{width:51px}.g-sel{width:226px}.g-three{width:72px}.g-mesh{width:74px}.g-info{width:29px}.g-disp{width:180px}.g-color{width:163px;margin-right:11px}.g-cut{width:52px}
.bar{width:1px;height:14px;background:#aaa}
.combo{display:flex;align-items:stretch;flex:none;height:20px;border:1px solid #999;background:#fff}
.chev{width:10px;height:auto;background:#e1e1e1;border-left:1px solid #adadad}
.all{width:88px;background:#aecbec;padding-left:1px;border-color:#a8bdd4}
.all .chev{background:#b9c4d0}
.mat{width:101px;padding-left:2px;border-color:#aaa}
.g-color .drop{flex:0 0 12px}
.caret{border:3px solid transparent;border-top:4px solid #000;border-bottom:0}
.work{display:grid;grid-template-columns:208px minmax(0,1fr);min-height:0}
.side{display:flex;flex-direction:column;padding:5px 5px 2px 1px;min-height:0}
.tabs{display:flex;height:20px;flex:none;align-items:flex-end}
.tab{height:18px;padding:0 6px;border:1px solid #dcdcdc;border-bottom:0}
.tab.cur{height:20px;background:#fff}
.pane{flex:1;min-height:0;display:flex;flex-direction:column;gap:3px;background:#fff;border:1px solid #d8d8d8;border-right:0;padding:4px 0 0 2px}
.dbrow{display:flex;align-items:center;flex:none}
.dbrow button{flex:1}
.combo.dbc{width:117px;padding-left:1px;gap:2px;align-items:center}
.dbc .chev{height:18px}
.sp{width:8px;height:16px}
.treebox{flex:1;min-height:0;border:1px solid #aaa;display:flex;flex-direction:column;justify-content:space-between}
.tree{list-style:none;margin:0;padding:0;height:555px;display:grid;grid-auto-rows:minmax(0,1fr);white-space:nowrap;overflow:hidden}
.tree li{display:flex;align-items:center;--dot:repeating-linear-gradient(#aaa 0 1px,transparent 1px 2px)}
.tree svg{width:14px;height:14px;margin:0 4px 0 1px}
.tree .ex+span{margin-left:3px}
.tree i{width:9px;height:1px;flex:none;background:repeating-linear-gradient(90deg,#aaa 0 1px,transparent 1px 2px) 4px 0/5px 1px no-repeat}
.l0{padding-left:1px}.l1{padding-left:15px}.l2{padding-left:29px}.l3{padding-left:43px}
.tree .in{background:var(--dot) 5px 0/1px 100% no-repeat}
.tree .l2.in,.tree .l3.in{background:var(--dot) 5px 0/1px 100% no-repeat,var(--dot) 33px 0/1px 100% no-repeat}
.tree .l2.last{background:var(--dot) 5px 0/1px 100% no-repeat,var(--dot) 33px 0/1px 50% no-repeat}
.tree .job{background:var(--dot) 19px 0/1px 100% no-repeat}
.tree .job.last{background:var(--dot) 19px 0/1px 50% no-repeat}
.ex{flex:none;width:9px;height:9px;border:1px solid #aaa;background:linear-gradient(#3c5fa8,#3c5fa8) center/5px 1px no-repeat,#fff}
.ex.plus{background:linear-gradient(#3c5fa8,#3c5fa8) center/5px 1px no-repeat,linear-gradient(#3c5fa8,#3c5fa8) center/1px 5px no-repeat,#fff}
.sel{line-height:12px;border-bottom:1px solid #111}
.scroll{display:flex;height:13px;background:#f0f0f0}
.scroll button{width:14px}
.scroll svg{width:9px;height:8px}
.track{flex:1;display:flex}
.thumb{width:92%;background:#cdcdcd}
.right{display:flex;flex-direction:column;min-width:0;min-height:0}
.context{display:flex;align-items:center;height:27px;flex:none;padding-left:5px;background:linear-gradient(#fff,#ececec);border-bottom:1px solid #888}
.context label{margin-right:5px}
.context .combo{margin-right:11px;padding-left:1px;gap:2px;align-items:center;border-color:#777 #bbb #bbb #777}
.context .chev{height:18px}
.c-mod{width:89px}.c-model{width:74px}.c-part{width:79px}
.stage{flex:1;min-height:0;display:flex}
.toolbox{width:50px;flex:none;padding:2px 1px 0;border-right:1px solid #888;background:linear-gradient(90deg,#fff,#eee)}
.set{display:grid;grid-template-columns:23px 23px;grid-auto-rows:24px;padding-bottom:1px;margin-bottom:1px}
.set+.set{border-top:1px solid #bbb;padding-top:1px}
.set button{position:relative}
.set svg{width:20px;height:20px}
.set .i18{width:18px;height:18px}
.fly::after{content:"";position:absolute;right:1px;bottom:2px;border:2px solid #111;border-left-color:transparent;border-top-color:transparent}
.viewport{flex:1;min-width:0;height:100%}
.axis{font-family:"Open Sans","Noto Sans",sans-serif;font-weight:700;font-size:15px;fill:#fff}
.prompt{height:30px;flex:none;display:flex;align-items:center;gap:3px;padding-left:4px;background:linear-gradient(#fff,#ededed)}
.prompt button{width:15px;height:18px;border:1px solid #bbb;background:#e4e4e4}
.prompt .back{background:#c8c8c8}
.prompt svg{width:13px;height:14px}
.foot{margin-left:33px;border-top:1px solid #aaa;border-left:1px solid #aaa;background:#f8f8f8}
```
